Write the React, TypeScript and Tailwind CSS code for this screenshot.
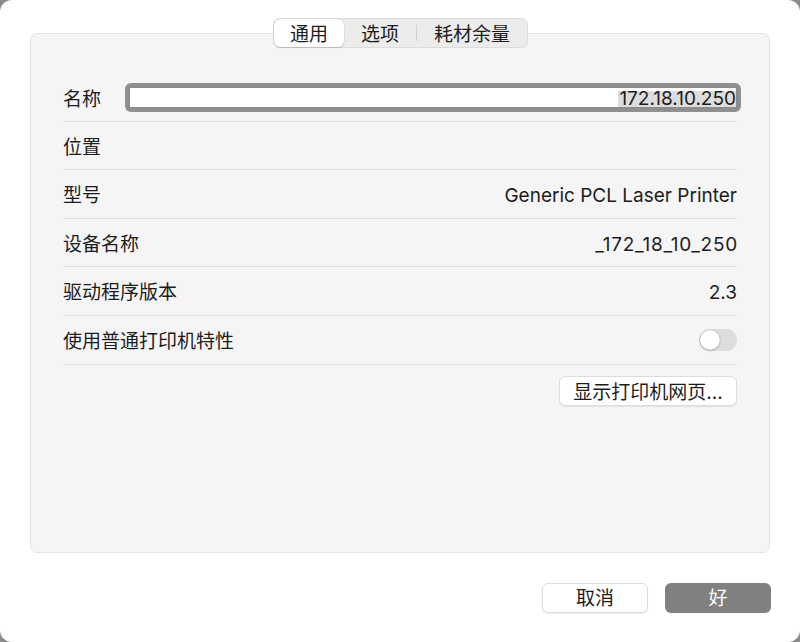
import React from "react";

const font = { fontFamily: "Inter, 'Noto Sans CJK SC', 'Noto Sans', sans-serif" };

function Row({ h, label, children }: { h: string; label: string; children?: React.ReactNode }) {
  return (
    <div className={`flex items-center justify-between border-b border-[#dedede] ${h}`}>
      <span className="pt-[5px] text-[19px] text-[#1c1c1c] whitespace-nowrap">{label}</span>
      <div className="flex items-center text-[19px] text-[#1c1c1c]">{children}</div>
    </div>
  );
}

export default function App() {
  return (
    <div className="w-[800px] h-[642px] bg-[#8c8c8c]" style={font}>
      <div className="w-full h-full bg-white rounded-[12px] flex flex-col px-[30px] pt-[18px]">
        {/* segmented control */}
        <div className="flex justify-center relative z-10">
          <div className="flex items-center h-[30px] rounded-[7px] border border-[#dcdcdc] bg-[#ececec] ml-[1px]">
            <div className="h-[28px] px-[16px] pt-[4px] flex items-center rounded-[6px] bg-white shadow-[0_0_1px_rgba(0,0,0,0.35),0_1px_1px_rgba(0,0,0,0.12)] text-[19px] text-[#1c1c1c]">
              通用
            </div>
            <div className="h-[28px] px-[17px] pt-[4px] flex items-center text-[19px] text-[#1c1c1c]">选项</div>
            <div className="w-px h-[16px] bg-[#d0d0d0]" />
            <div className="h-[28px] px-[17px] pt-[4px] flex items-center text-[19px] text-[#1c1c1c]">耗材余量</div>
          </div>
        </div>

        {/* panel */}
        <div className="mt-[-15px] h-[520px] rounded-[7px] border border-[#e6e6e6] bg-[#f5f5f5] px-[32px] pt-[40px]">
          <div className="flex items-center h-[48px] border-b border-[#dedede]">
            <span className="w-[65px] pt-[5px] text-[19px] text-[#1c1c1c] whitespace-nowrap">名称</span>
            <div className="flex-1 mr-[-1px] h-[23px] rounded-[3px] border-2 border-[#8c8c8c] ring-[3px] ring-[#909090] bg-white flex items-end justify-end">
              <span className="bg-[#dddddd] text-[19px] text-[#1c1c1c] h-[16px] leading-[16px] pl-[1px]">
                172.18.10.250
              </span>
            </div>
          </div>
          <Row h="h-[48px]" label="位置" />
          <Row h="h-[49px]" label="型号"><span className="pt-[5px]">Generic PCL Laser Printer</span></Row>
          <Row h="h-[48px]" label="设备名称"><span className="pt-[5px] tracking-[0.04em] mr-[-1px]">_172_18_10_250</span></Row>
          <Row h="h-[49px]" label="驱动程序版本"><span className="pt-[5px]">2.3</span></Row>
          <Row h="h-[49px]" label="使用普通打印机特性">
            <div className="w-[38px] h-[22px] rounded-full bg-[#dddddd] p-[1px] flex items-center">
              <div className="w-[20px] h-[20px] rounded-full bg-white shadow-[0_0_1px_rgba(0,0,0,0.4),0_1px_2px_rgba(0,0,0,0.2)]" />
            </div>
          </Row>
          <div className="flex justify-end mt-[11px]">
            <button className="h-[30px] w-[178px] pt-[4px] rounded-[6px] bg-white border border-[#dcdcdc] shadow-[0_1px_1px_rgba(0,0,0,0.08)] text-[19px] text-[#1c1c1c] flex items-center justify-center">
              显示打印机网页...
            </button>
          </div>
        </div>

        {/* bottom buttons */}
        <div className="flex justify-end gap-[17px] mt-[30px] mr-[-1px]">
          <button className="h-[30px] w-[106px] pt-[2px] rounded-[6px] bg-white border border-[#dcdcdc] shadow-[0_1px_1px_rgba(0,0,0,0.08)] text-[19px] text-[#1c1c1c] flex items-center justify-center">
            取消
          </button>
          <button className="h-[30px] w-[106px] pt-[2px] rounded-[6px] bg-[#808080] text-[19px] text-white flex items-center justify-center">
            好
          </button>
        </div>
      </div>
    </div>
  );
}
